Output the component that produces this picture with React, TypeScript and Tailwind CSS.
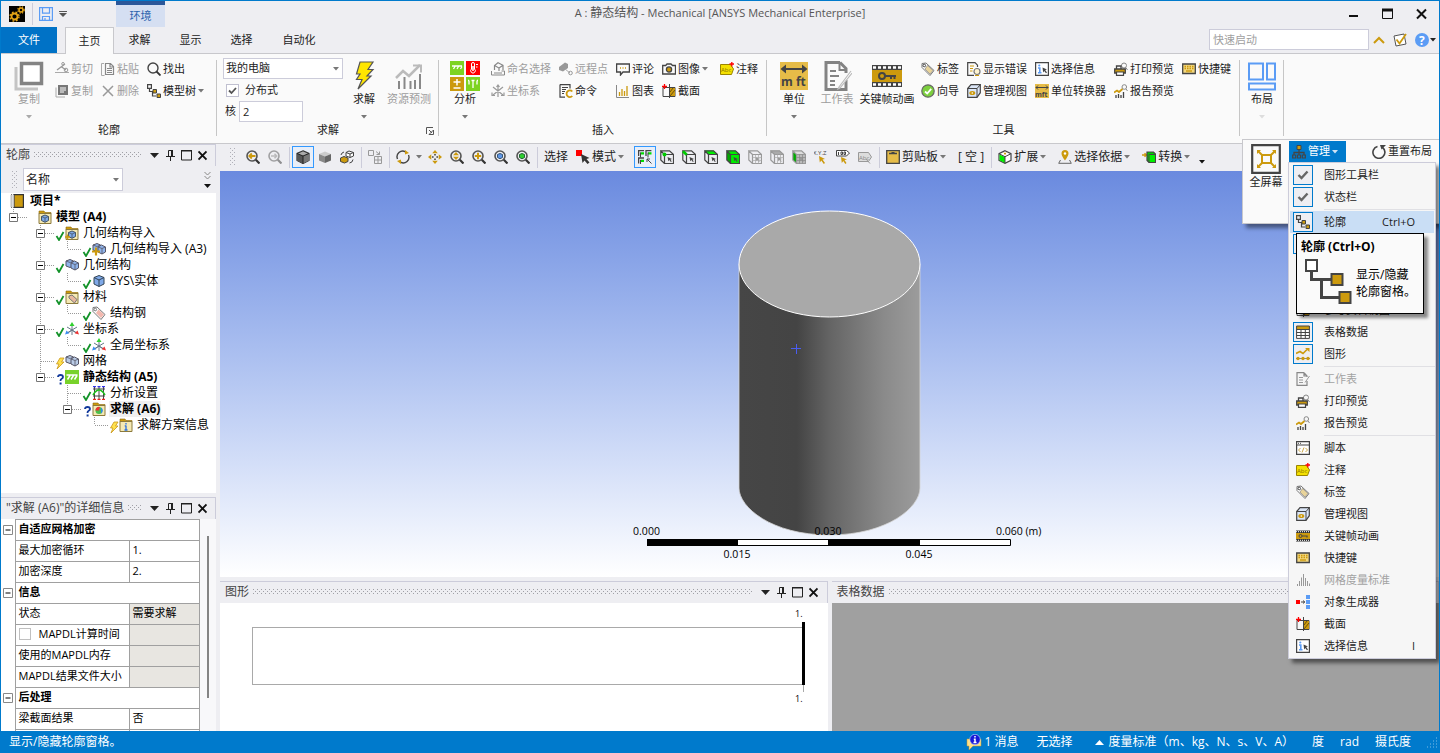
import { useState, type ReactNode } from "react";

const GRAY = "#444";
const GOLD = "#cc9a0e";
const BLUE = "#5b9cf5";

function Svg({ w = 14, h = 14, children }: { w?: number; h?: number; children: ReactNode }) {
  return (
    <svg width={w} height={h} viewBox={`0 0 ${w} ${h}`} fill="none" className="block shrink-0" aria-hidden="true">
      {children}
    </svg>
  );
}

const lens = (
  <>
    <circle cx="6" cy="6" r="5" stroke="#555" strokeWidth="1.6" />
    <path d="M9.8 9.8L13.5 13.5" stroke="#333" strokeWidth="2.2" />
  </>
);

const pickCube = (fill: string, front = "none", color = GRAY) => (
  <>
    <path d="M1 1.5V.5h8.5l4 4H4.5z" fill={fill} />
    {front !== "none" && <path d="M1 1l3.5 3.500V13.500L1 10z" fill="#0a0" />}
    <path d="M4.500 4.500h9v9h-9z" fill={front} />
    <path d="M4.500 4.500h9v9h-9zM4.500 4.500L.8 1V10l3.700 3.500M.8 .8h8.700l4 3.700" stroke={color} strokeWidth="1.2" />
    <path d="M7.500 7l4.500 2-1.500.5 1.200 2-.9.600-1.200-2-1.200 1.200z" fill={color} />
  </>
);

const folder = (
  <>
    <path d="M1 3V1h5l1 1.500h6V4H1z" fill={GOLD} stroke="#8a6a10" strokeWidth=".6" />
    <path d="M1 3.500h12v10H1z" fill="#f5e9b4" stroke="#8c7a3c" strokeWidth="1" />
  </>
);

const smallCube = (
  <>
    <path d="M7 5l3.500 1.500v4L7 12.300l-3.500-1.800v-4z" fill="#7fa9e8" stroke="#456" strokeWidth="1" />
    <path d="M3.500 6.500L7 8l3.500-1.500M7 8v4" stroke="#456" strokeWidth=".8" />
  </>
);

const twinCubes = (fill: string) => (
  <>
    <path d="M1 3l4-1.500L8.500 3v5L5 9.500 1 8z" fill={fill} stroke="#556" />
    <path d="M6 5l3.500-2L13.500 5v5L10 12l-4-2z" fill={fill} stroke="#556" />
    <path d="M6 5l4 1.500L13.500 5M10 6.500V12M1 3l4 1.500L8.500 3" stroke="#556" strokeWidth=".8" />
  </>
);

const axes = (
  <>
    <path d="M7 3v10M7 8l-4 3M7 8l4 3M2 5l10 6M12 5L2 11" stroke="#678" strokeWidth="1" />
    <path d="M7 0l2.500 4h-5z" fill="#2fd02f" />
    <path d="M14 12.500l-1.500-4-2.800 2.800z" fill="#e33" />
    <path d="M0 12.500l1.500-4 2.800 2.800z" fill="#3a8cf0" />
  </>
);

const icons: Record<string, ReactNode> = {
  cut: (
    <>
      <path d="M0 10.500h14" stroke="#aaa" />
      <path d="M2 8L10 2M6 4.500l5 3.500" stroke="#999" strokeWidth="1.300" />
      <circle cx="11" cy="8" r="1.800" stroke="#999" />
      <circle cx="8" cy="1.800" r="1.300" stroke="#999" />
    </>
  ),
  copy: (
    <>
      <path d="M1 3.500v9.500h9" stroke="#aaa" />
      <path d="M3 1h10v10H3z" fill="#777" />
      <path d="M5 4h6M5 6h6M5 8h4" stroke="#fff" />
    </>
  ),
  paste: (
    <>
      <path d="M3 1.500H.5v12h3" stroke="#aaa" />
      <path d="M4.500 1.500h5l3 3v8h-8zM9 1.500V5h3.500" stroke="#888" strokeWidth="1.200" />
      <path d="M6 6.500h5M6 8.500h5M6 10.500h5" stroke="#888" />
    </>
  ),
  del: <path d="M2 2l10 10M12 2L2 12" stroke="#999" strokeWidth="1.500" />,
  find: (
    <>
      <circle cx="6" cy="6" r="5" stroke="#444" strokeWidth="1.400" />
      <path d="M9.500 9.500l4 4" stroke="#333" strokeWidth="1.800" />
    </>
  ),
  tree: (
    <>
      <path d="M.6 .6h3.800v3.800H.6z" stroke={GRAY} strokeWidth="1.200" />
      <path d="M2.500 5v2.500H6M5.500 8v4H9" stroke={GRAY} strokeWidth="1.200" />
      <path d="M6 5.500h3.500V9H6zM10 10h3.500v3.500H10z" fill={GOLD} stroke={GRAY} />
    </>
  ),
  named: (
    <>
      <path d="M.5 9v4h13V9h-3M3 11h8" stroke="#888" />
      <path d="M3.500 8V3.500L7 .8l5 2.500V8M3.500 3.500l4.500 2.500V9M8 6l4-2.700" stroke="#888" strokeWidth="1.200" />
    </>
  ),
  coord: (
    <path d="M7 1v12M2 3l10 8M12 3L2 11M5.500 3L7 1l1.500 2M1 8.500v3h3M13 8.500v3h-3" stroke="#999" strokeWidth="1.200" />
  ),
  remote: (
    <>
      <path d="M0 5l6-4.500L9 2v4L4 9.500 0 8z" fill="#999" />
      <path d="M6 7l5 4" stroke="#aaa" />
      <circle cx="11.500" cy="11" r="1.800" stroke="#999" />
    </>
  ),
  command: (
    <>
      <path d="M1 .6h10v4M1 .6v12.500h5" stroke={GRAY} strokeWidth="1.200" />
      <path d="M3 3.500h6M3 5.500h4M3 7.500h3M3 9.500h2" stroke={GRAY} />
      <path d="M13.300 7.500a3.300 3.300 0 1 0 0 4.500" stroke={GOLD} strokeWidth="1.800" />
    </>
  ),
  comment: (
    <>
      <path d="M.6 2h12.800v8H7l-2.500 3V10H.6z" stroke={GRAY} strokeWidth="1.300" />
      <path d="M4 6h1M6.500 6h1M9 6h1" stroke={GOLD} strokeWidth="1.300" />
    </>
  ),
  chart: (
    <>
      <path d="M.5 1v12.500H13" stroke="#888" />
      <path d="M3.500 12V8M6 12V5M8.500 12V7M11 12V2" stroke={GOLD} strokeWidth="1.300" />
    </>
  ),
  image: (
    <>
      <path d="M.7 3.500h3L5 2h4l1.500 1.500h3V12H.7z" stroke={GRAY} strokeWidth="1.300" />
      <circle cx="7" cy="7.500" r="2.600" stroke={GRAY} fill={GOLD} strokeWidth="1.300" />
    </>
  ),
  section: (
    <>
      <path d="M1 3.500h12v9H1z" stroke={GRAY} />
      <path d="M7.500 4H13v8H7.500z" fill={GOLD} />
      <path d="M8 12l5-6M8 8l3-4" stroke="#6b510a" />
      <path d="M7.500 0v14" stroke={GRAY} />
      <path d="M0 2.500h5M2.500 0v5" stroke="#f00" strokeWidth="1.300" />
    </>
  ),
  annot: (
    <>
      <path d="M.5 2.500h10l3 4.500-2 5.500H.5z" fill="#f4e000" stroke="#9a8500" />
      <text x="1" y="10" fontSize="6" fill="#8a7600">Abc</text>
      <path d="M9.500 2h4.500M11.800 0v4.500" stroke="#f00" strokeWidth="1.300" />
    </>
  ),
  tag: (
    <>
      <path d="M1 1.500l4-.5 8 7.500-4 5-8-8z" fill="#fff" stroke="#777" />
      <path d="M6.500 3.500l5.500 5-3 3.500-5-5z" fill="#e9d49a" stroke="#777" strokeWidth=".6" />
      <circle cx="3.300" cy="3.500" r="1.300" stroke={GRAY} />
    </>
  ),
  wizard: (
    <>
      <circle cx="7" cy="7" r="6.200" fill="#7ccf3e" stroke="#666" strokeWidth="1.200" />
      <path d="M4 7.500L6.200 9.500 10.200 4.800" stroke="#fff" strokeWidth="1.800" />
    </>
  ),
  errors: (
    <>
      <path d="M3 .7H.7v12.600H7M3 .7h5l2.500 2.500V5" stroke={GRAY} strokeWidth="1.200" />
      <path d="M3 4h4M3 6.500h3M3 9h2.500" stroke={GOLD} />
      <circle cx="10" cy="9.500" r="3" fill="#fdf3cf" stroke="#777" strokeWidth="1.200" />
      <path d="M8 13.500h4" stroke={GOLD} />
    </>
  ),
  views: (
    <>
      <path d="M.7 4.500L4 .7h9.300v8L10 13.300H.7z" fill="#dbe6f7" stroke={GRAY} strokeWidth="1.200" />
      <path d="M.7 4.500H10l3.300-3.800M10 4.500v8.800" stroke={GRAY} />
      <ellipse cx="5.300" cy="9" rx="3" ry="2" fill={GOLD} />
      <circle cx="5.300" cy="9" r=".8" fill="#fff" />
    </>
  ),
  selinfo: (
    <>
      <path d="M.6 .6h12.800v12.800H.6z" fill="#fff" stroke={GRAY} strokeWidth="1.200" />
      <path d="M3 6h1.800v4.500M3 10.800h3.500" stroke={BLUE} strokeWidth="1.600" />
      <circle cx="4.300" cy="3.500" r="1.100" fill={BLUE} />
      <path d="M7.500 5.500l4.500 2-1.800.6 1.800 2.400-1 .8-1.800-2.300-1 1.500z" fill={GRAY} />
    </>
  ),
  convert: (
    <>
      <path d="M0 0h14v14H0z" fill="#e6bc48" />
      <path d="M1 3.500h12M3 1.500l-2 2 2 2M11 1.500l2 2-2 2" stroke={GRAY} />
      <text x="0" y="13" fontSize="7" fontWeight="700" fill={GRAY}>mft</text>
    </>
  ),
  print: (
    <>
      <circle cx="10" cy="3.500" r="2.500" stroke="#888" />
      <path d="M11.800 5.500L13.500 8" stroke="#888" />
      <path d="M2.500 7V4h4.500v3" stroke={GRAY} strokeWidth="1.300" />
      <path d="M.7 7h10.600v4H.7z" fill={GOLD} stroke={GRAY} strokeWidth="1.300" />
      <path d="M2.500 10h7v3.400h-7z" fill="#fff" stroke={GRAY} strokeWidth="1.200" />
    </>
  ),
  report: (
    <>
      <circle cx="10.300" cy="3" r="2.300" stroke="#888" />
      <path d="M12 5l1.500 2" stroke="#888" />
      <path d="M0 8.500l3-2 2 1.500 3.500-3" stroke={GOLD} strokeWidth="1.800" />
      <path d="M2 14v-3M4.500 14v-4M7 14v-3M9.500 14V8" stroke={GRAY} strokeWidth="1.300" />
    </>
  ),
  keyboard: (
    <>
      <path d="M.7 2h12.600v9.500H.7z" fill="#f3d77e" stroke={GRAY} strokeWidth="1.300" />
      <path d="M2.500 4.500h9M2.500 6.500h9" stroke={GOLD} strokeWidth="1.400" strokeDasharray="1.500 1" />
      <path d="M4 9h6" stroke={GOLD} strokeWidth="1.400" />
    </>
  ),
  project: (
    <>
      <path d="M4 .6h9.400v12.800H4z" fill={GOLD} stroke="#333" strokeWidth="1.200" />
      <path d="M1 .5h3v13H1z" fill="#ddd" stroke="#777" strokeDasharray="1 1" />
    </>
  ),
  folderCube: (<>{folder}{smallCube}</>),
  folderImport: (
    <>
      {folder}
      {smallCube}
      <path d="M0 11h5M2.500 8.500v5" stroke={GOLD} strokeWidth="1.500" />
    </>
  ),
  geomImport: (
    <>
      {twinCubes("#8fb3ea")}
      <path d="M0 9.500h8M4 5.500v8" stroke={GOLD} strokeWidth="2.200" />
    </>
  ),
  geometry: twinCubes("#8fb3ea"),
  mesh: twinCubes("#b9cbe6"),
  body: (
    <>
      <path d="M7 1.500l5 2v6.500l-5 2.500-5-2.500V3.500z" fill="#7fa9e8" stroke="#345" />
      <path d="M2 3.500l5 2.500 5-2.500M7 6v6.500" stroke="#345" />
    </>
  ),
  folderTag: (
    <>
      {folder}
      <path d="M4 6l3-1 5 4.500-2.500 3.500L4 8z" fill="#e8b8a0" stroke="#777" />
    </>
  ),
  steel: (
    <>
      <path d="M1 1.500l4-.5 8 7.500-4 5-8-8z" fill="#fff" stroke="#777" />
      <path d="M6.500 3.500l5.500 5-3 3.500-5-5z" fill="#f2b8ae" />
      <circle cx="3.300" cy="3.500" r="1.300" stroke="#777" />
    </>
  ),
  axes,
  staticStruct: (
    <>
      <path d="M0 0h14v14H0z" fill="#78d22a" />
      <path d="M1.500 5h11M5 5.500l-2.500 4M8.500 5.500L6 9.500M12 5.500l-2.500 4" stroke="#fff" strokeWidth="1.500" />
    </>
  ),
  settings: (
    <>
      <path d="M2.500 1v12M7 1v12M11.500 1v12M1 3h12M1 10h12" stroke={GRAY} />
      <path d="M1 9Q7-1 13 9" stroke="#1fc01f" strokeWidth="1.600" />
      <path d="M1 13.500h3M5.500 13.500h3M10 13.500h3" stroke="#e22" strokeWidth="1.600" />
      <path d="M1 .5h3M5.500 .5h3M10 .5h3" stroke="#33e" strokeWidth="1.400" />
    </>
  ),
  solution: (
    <>
      {folder}
      <circle cx="7" cy="8.500" r="3.500" fill="#4bbf4b" />
      <path d="M3.500 8.500A3.500 3.500 0 0 1 8 5L7 8.500z" fill="#e33" />
      <path d="M9 5.500a3.500 3.500 0 0 1 0 6z" fill="#38e" />
    </>
  ),
  solInfo: (
    <>
      {folder}
      <path d="M7 5v1.500M7 7.500V12M5.500 12h3M5.700 7.800H7" stroke="#2a6fe0" strokeWidth="1.300" />
    </>
  ),
  zoomBack: (<>{lens}<path d="M3 6h6.500M5.800 3.500L3.300 6l2.500 2.500" stroke={GOLD} strokeWidth="1.800" /></>),
  zoomFwd: (
    <g opacity=".5">
      {lens}
      <path d="M3 6h6M6.500 3.800L8.700 6 6.500 8.200" stroke="#888" strokeWidth="1.500" />
    </g>
  ),
  zoomUD: (<>{lens}<path d="M6 2L9 5.300H3zM6 10L3 6.700h6z" fill={GOLD} /></>),
  zoomIn: (<>{lens}<path d="M2.800 6h6.400M6 2.800v6.400" stroke={GOLD} strokeWidth="2" /></>),
  zoomFit: (<>{lens}<path d="M3.500 4.500L6 3.500l2.500 1v3L6 8.800 3.500 7.500z" fill="#5d95e8" stroke="#357" /></>),
  zoomSel: (<>{lens}<path d="M3.500 4.500L6 3.500l2.500 1v3L6 8.800 3.500 7.500z" fill="#2fd02f" stroke="#263" /></>),
  shaded: (
    <>
      <path d="M7 .8l6 2.700v7L7 13.500l-6-3v-7z" fill="#aaa" stroke="#333" strokeWidth="1.200" />
      <path d="M1 3.500L7 6v7.500l-6-3z" fill="#555" />
      <path d="M13 3.500L7 6v7.500l6-3z" fill="#777" />
      <path d="M1 3.500L7 6l6-2.500M7 6v7.500" stroke="#222" />
    </>
  ),
  solid: (
    <>
      <path d="M7 1.500l6 2.500-6 2.500L1 4z" fill="#ccc" />
      <path d="M1 4l6 2.500V13l-6-2.500z" fill="#888" />
      <path d="M13 4L7 6.500V13l6-2.500z" fill="#666" />
    </>
  ),
  swapCubes: (
    <>
      <path d="M6 2.500L9 1l4.500 1.500v3.500L10 7.500 6 6zM6 2.500L10 4l3.500-1.500M10 4v3.500" fill="#fff" stroke={GRAY} />
      <path d="M.5 8L4 6.500 8 8v3.500L4.500 13l-4-1.500z" fill={GOLD} stroke={GRAY} />
      <path d="M1 5a4 4 0 0 1 3-3M13 9.500a4 4 0 0 1-3.500 3.500" stroke={GRAY} />
    </>
  ),
  bodies: (
    <g stroke="#999">
      <path d="M.5 .5h5v5h-5zM6.500 6.500h7v7h-7zM10 6.500v7M6.500 10h7" />
      <path d="M8 1.500l3.500 3M11.500 1.500v3h-3" />
    </g>
  ),
  rotate: (
    <>
      <path d="M1.500 9A5.700 5.700 0 0 1 9.500 1.800M12.500 5A5.700 5.700 0 0 1 4.500 12.200" stroke={GRAY} strokeWidth="1.400" />
      <path d="M9 0l4 3-4 1.500zM5 14l-4-3 4-1.500z" fill={GOLD} />
    </>
  ),
  pan: (
    <>
      <path d="M7 0l2.800 3.300H4.200zM7 14l2.800-3.300H4.200zM0 7l3.300-2.800v5.600zM14 7l-3.300-2.800v5.600z" fill={GOLD} />
      <path d="M6.200 4h1.600v1.600H6.200zM6.200 8.400h1.600V10H6.200zM4 6.200h1.600v1.600H4zM8.400 6.200H10v1.600H8.400z" fill={GRAY} />
    </>
  ),
  pickMode: (
    <>
      <path d="M0 0h6v6H0z" fill="#f00" />
      <path d="M5 4l8.500 4-3 1 3 3.500-2 1.500-3-3.500-2 2.500z" fill="#333" />
    </>
  ),
  smartPick: (
    <>
      <path d="M.6 6V.6H6M8 6V.6h5.400M.6 13.500V8H6" stroke={GRAY} strokeWidth="1.300" />
      <path d="M2.500 3.300H6M10 3.300h3.500M2.500 10.800H6" stroke="#0d0" strokeWidth="2.200" />
      <path d="M2.500 2.500v5M10 2.500v5M2.500 10v4M9 9l4.500 4.500M9 12V9h3" stroke={GRAY} />
    </>
  ),
  pickVertex: (<>{pickCube("none")}<circle cx="4.500" cy="4.500" r="2" fill="#0c0" /></>),
  pickEdge: (<>{pickCube("none")}<path d="M1 1.300l3.700 3.400" stroke="#0c0" strokeWidth="2.800" /></>),
  pickFace: pickCube("#0e0"),
  pickBody: pickCube("#0e0", "#0e0"),
  pickGray: (
    <>
      {pickCube("none", "none", "#999")}
      <path d="M4.500 7.500h9M4.500 10.500h9M7.500 4.500v9M10.500 4.500v9" stroke="#aaa" strokeWidth=".7" />
    </>
  ),
  pickGray2: (
    <>
      {pickCube("#aaa", "none", "#999")}
      <path d="M4.500 7.500h9M7.500 4.500v9M10.500 4.500v9" stroke="#aaa" strokeWidth=".7" />
    </>
  ),
  pickGray3: (
    <>
      {pickCube("#ddd", "#bbb", "#999")}
      <path d="M4.500 7.500h9M4.500 10.500h9M7.500 4.500v9M10.500 4.500v9" stroke="#888" strokeWidth=".7" />
    </>
  ),
  coordsPick: (
    <>
      <text x="-1" y="4.500" fontSize="6" fill={GRAY}>X.Y.Z</text>
      <path d="M5 6l6 3-2.500.5 2.500 3.500-1.200 1-2.500-3.500-1.500 2z" fill={GOLD} />
    </>
  ),
  label: (
    <>
      <path d="M.5 .5h10l3 2.500-3 3H.5z" fill="#fff" stroke={GRAY} />
      <path d="M2.500 2v3M5 2h1.500v2.500H5zM8 2h1.500v2.500H8z" stroke={GRAY} />
      <path d="M5 7l6 2.500-2.500.5 2 3-1.200 1-2-3-1.500 2z" fill={GOLD} />
    </>
  ),
  abc: (
    <>
      <path d="M.5 2.500h10l3 4.500-3 4.500H.5z" fill="#ddd" stroke="#999" />
      <text x="1" y="9.500" fontSize="6" fill="#888">Abc</text>
      <path d="M8 9l4 4.500" stroke="#999" />
    </>
  ),
  clipboard: (
    <>
      <path d="M.7 .7h12.600v12.600H.7z" fill="#e6bc48" stroke={GRAY} strokeWidth="1.300" />
      <path d="M3 3.500h8M5.500 2.800h3" stroke={GRAY} strokeWidth="1.400" />
    </>
  ),
  extend: (
    <>
      <path d="M7 .7l6 3v6.600l-6 3-6-3V3.700z" fill="#fff" stroke={GRAY} strokeWidth="1.200" />
      <path d="M1.500 4.500L7 7v6l-5.500-2.700z" fill="#0e0" />
      <path d="M1 3.700l6 3 6-3M7 6.700v6.600" stroke={GRAY} />
      <path d="M6 2.500l1 2 1-2" stroke={GOLD} />
    </>
  ),
  pin: (
    <>
      <path d="M7 0a3.500 3.500 0 0 1 3.500 3.500C10.500 6 7 10.500 7 10.500S3.500 6 3.500 3.500A3.500 3.500 0 0 1 7 0z" fill={GOLD} />
      <circle cx="7" cy="3.500" r="1.200" fill="#fff" />
      <path d="M2.500 10L.7 13.300h12.600L11.500 10" stroke="#666" />
    </>
  ),
  transform: (
    <>
      <path d="M0 5h4M2.500 3.200L4.500 5 2.500 6.800" stroke={GOLD} strokeWidth="1.400" />
      <path d="M5 2h6.500l2 2v8.500H7L5 10.500z" fill="#0c0" stroke={GRAY} strokeWidth="1.200" />
      <path d="M7 4.500h6.500v8H7z" fill="#0e0" stroke={GRAY} />
    </>
  ),
  manage: (
    <>
      <path d="M5 .5h4v4H5z" fill={GOLD} stroke={GRAY} />
      <path d="M7 5v2.500M2 10V7.500h10V10M7 7.500V10" stroke={GRAY} strokeWidth="1.300" />
      <path d="M.7 10h3v3h-3zM5.500 10h3v3h-3zM10.300 10h3v3h-3z" stroke={GRAY} strokeWidth="1.200" />
    </>
  ),
  reset: (
    <>
      <path d="M5.500 1.500a6 6 0 1 0 5 1" stroke={GRAY} strokeWidth="1.600" />
      <path d="M8 0h6L9.500 4.500z" fill={GRAY} />
    </>
  ),
  check: <path d="M2.500 7L5.500 10 11.500 3.500" stroke="#666" strokeWidth="2.400" />,
  table: (
    <>
      <path d="M.6 1h12.800v12.400H.6z" fill="#fff" />
      <path d="M.6 1h12.800v3.500H.6z" fill={GOLD} />
      <path d="M.6 1h12.800v12.400H.6zM.6 4.500h12.800M.6 7.500h12.800M.6 10.500h12.800M5 4.500v9M9.300 4.500v9" stroke={GRAY} />
    </>
  ),
  graph: (
    <>
      <path d="M0 6.500l4-2 3 2 4-4" stroke={GOLD} strokeWidth="1.600" />
      <path d="M9 1h4.500v4z" fill={GOLD} />
      <path d="M0 11.500h14" stroke="#888" />
      <circle cx="2" cy="11.500" r="1.700" fill={GOLD} />
      <circle cx="7" cy="11.500" r="1.700" fill={GOLD} />
      <circle cx="12" cy="11.500" r="1.700" fill={GOLD} />
    </>
  ),
  worksheet: (
    <>
      <path d="M8 .7H1v12.600h10V9M8 .7L11 4v1M8 .7V4h3" stroke="#888" strokeWidth="1.200" />
      <path d="M3 5.500h4M3 8h4M3 10.500h4M13.500 4L9 10.500" stroke="#999" />
    </>
  ),
  script: (
    <>
      <path d="M.6 .6h12.800v12.800H.6zM.6 4h12.800" fill="#fff" stroke={GRAY} strokeWidth="1.200" />
      <path d="M2 2.300h1M4 2.300h1" stroke={GRAY} />
      <path d="M4.500 7L2.500 9l2 2M9.500 7l2 2-2 2M8 6.500l-2 5" stroke="#cda94a" />
    </>
  ),
  keyframe: (
    <>
      <path d="M0 1.500h14v11H0z" fill="#333" />
      <path d="M0 4h14v6H0z" fill={GOLD} />
      <path d="M0 2.700h14M0 11.300h14" stroke="#fff" strokeDasharray="1 1" />
      <circle cx="4.500" cy="7" r="1.500" stroke={GRAY} />
      <path d="M6 7h5v1.500" stroke={GRAY} strokeWidth="1.200" />
    </>
  ),
  metrics: (
    <path d="M1.500 13v-2M3.500 13V8M5.500 13V4.500M7.500 13V1M9.500 13V5M11.500 13V8M13.500 13v-2.500" stroke="#999" />
  ),
  generator: (
    <>
      <path d="M0 5h4v4H0z" fill="#f00" />
      <path d="M5 7h4M7 5.500L8.700 7 7 8.500" stroke={GRAY} />
      <path d="M10 0h4v4h-4zM10 5h4v4h-4zM10 10h4v4h-4z" fill={BLUE} />
    </>
  ),
};

function Icon({ name }: { name: string }) {
  return <Svg>{icons[name]}</Svg>;
}

function Caret({ color = "#777" }: { color?: string }) {
  return (
    <Svg w={6} h={4}>
      <path d="M0 0h6L3 3.500z" fill={color} />
    </Svg>
  );
}

/* ---------- title bar and ribbon tabs ---------- */

function TitleBar() {
  return (
    <div className="flex h-[26px] shrink-0">
      <div className="flex w-[166px] shrink-0">
        <div className="flex w-[115px] items-center pl-2">
          <Svg w={16} h={16}>
            <path d="M0 0h16v16H0z" fill="#000" />
            <circle cx="5.500" cy="10.500" r="3" stroke="#e5a416" strokeWidth="1.800" />
            <circle cx="5.500" cy="10.500" r="4.500" stroke="#e5a416" strokeWidth="1.400" strokeDasharray="1.800 1.800" />
            <circle cx="12" cy="4" r="2" stroke="#e5a416" strokeWidth="1.500" />
            <circle cx="12" cy="4" r="3.200" stroke="#e5a416" strokeWidth="1.200" strokeDasharray="1.300 1.300" />
          </Svg>
          <span className="ml-[7px] h-[22px] w-px bg-[#ccccda]" />
          <button aria-label="保存" className="ml-1.5">
            <Svg>
              <path d="M.6 .6h12.800v12.800H.6zM3.500 .6v5.500h7V.6M3.500 13.400V9.500h7v3.900M6 11v2.400" stroke={BLUE} strokeWidth="1.200" />
            </Svg>
          </button>
          <button aria-label="自定义快速访问" className="ml-1.5">
            <Svg w={8} h={6}>
              <path d="M0 .5h8" stroke="#555" />
              <path d="M0 2h8L4 6z" fill="#555" />
            </Svg>
          </button>
        </div>
        <div className="w-[49px] border-t-[4px] border-[#2b579a] bg-[#d5dff2] text-center text-[11px] leading-[22px] text-[#2b62ad]">
          环境
        </div>
      </div>
      <h1 className="flex-1 text-center text-[11px] leading-6 text-[#555]">
        A : <span className="text-[12px]">静态结构</span> - Mechanical [ANSYS Mechanical Enterprise]
      </h1>
      <div className="flex w-[166px] shrink-0 items-center justify-end gap-[23px] pr-3">
        <button aria-label="最小化">
          <Svg w={11} h={12}><path d="M1 8h9" stroke="#111" strokeWidth="2" /></Svg>
        </button>
        <button aria-label="最大化">
          <Svg w={11} h={12}>
            <path d="M.5 2h10v8.500H.5z" stroke="#111" />
            <path d="M0 2h11" stroke="#111" strokeWidth="3" />
          </Svg>
        </button>
        <button aria-label="关闭">
          <Svg w={11} h={12}><path d="M1 1.500l9 9M10 1.500l-9 9" stroke="#111" strokeWidth="2" /></Svg>
        </button>
      </div>
    </div>
  );
}

function TabBar() {
  return (
    <div className="flex h-[27px] shrink-0 border-b border-[#c8c8cc] text-[11px] text-[#222]">
      <button className="h-[26px] w-14 bg-[#0072c6] text-white">文件</button>
      <nav className="ml-2 flex">
        <button className="h-[27px] w-[49px] border border-b-0 border-[#c8c8cc] bg-[#fafafa]">主页</button>
        <button className="w-[51px]">求解</button>
        <button className="w-[51px]">显示</button>
        <button className="w-[51px]">选择</button>
        <button className="w-16">自动化</button>
      </nav>
      <div className="ml-auto flex items-start pt-[2px]">
        <input
          aria-label="快速启动"
          placeholder="快速启动"
          className="h-[21px] w-40 border border-[#ccccda] bg-white px-[3px] text-[11px] outline-none placeholder:text-[#a0a0a0]"
        />
        <div className="flex h-[21px] items-center pr-[3px]">
          <button aria-label="折叠" className="ml-1">
            <Svg w={12} h={8}><path d="M1 7l5-5 5 5" stroke={GOLD} strokeWidth="2" /></Svg>
          </button>
          <button aria-label="选项" className="ml-2">
            <Svg>
              <path d="M1 3l10-2 2 10-10 2z" stroke="#555" fill="#fff" />
              <path d="M3.500 6.500l3 4L13 1" stroke={GOLD} strokeWidth="1.800" />
            </Svg>
          </button>
          <button aria-label="帮助" className="ml-2 flex items-center gap-px">
            <Svg>
              <circle cx="7" cy="7" r="7" fill={BLUE} />
              <text x="4" y="11.500" fontSize="12" fontWeight="700" fill="#fff">?</text>
            </Svg>
            <Caret color="#222" />
          </button>
        </div>
      </div>
    </div>
  );
}

/* ---------- ribbon ---------- */

const bigIcons: Record<string, ReactNode> = {
  copy: (
    <>
      <path d="M2 6v22h22" stroke="#c4c4c4" strokeWidth="3" />
      <path d="M7.500 2.500h20v20h-20z" fill="#fff" stroke="#838383" strokeWidth="3.500" />
    </>
  ),
  solve: (
    <path d="M11 1h13l-5 7.500h5L18 15h4L9 28l4-9.500H7.500L11 13H7.500z" fill="#ffe600" stroke="#555" strokeWidth="1.200" />
  ),
  forecast: (
    <>
      <path d="M2 17l7-7 6 5L26 4" stroke="#bbb" strokeWidth="2.500" />
      <path d="M19 4.500h8v7" stroke="#bbb" strokeWidth="2" />
      <path d="M5 28v-8M10.500 28V16M16.500 28v-8M21 28v-9M26 28V13" stroke="#888" strokeWidth="2" />
    </>
  ),
  analysis: (
    <>
      <path d="M0 0h14v14H0zM16 16h14v14H16z" fill="#7ed321" />
      <path d="M16 0h14v14H16z" fill="#f00" />
      <path d="M0 16h14v14H0z" fill={GOLD} />
      <path d="M2 5h10M5 5.500L3.500 8M8.500 5.500L7 8M12 5.500L10.500 8" stroke="#fff" strokeWidth="1.300" />
      <path d="M21.500 8V3a1.500 1.500 0 0 1 3 0v5a2.300 2.300 0 1 1-3 0zM26 3.500h2M26 6h1.500" stroke="#fff" />
      <path d="M23 5v5" stroke="#fff" strokeWidth="1.500" />
      <path d="M3.500 21h7M7 18v6.500M3.500 27h7" stroke="#fff" strokeWidth="1.500" />
      <path d="M18 19.500h1M21.500 19.500h3M27 19.500h1M19 19.500v4M23 20v7M27 19.500v4" stroke="#fff" strokeWidth="1.300" />
    </>
  ),
  units: (
    <>
      <path d="M1 1h28v28H1z" fill="#e6bc48" />
      <path d="M3 8h24" stroke={GRAY} strokeWidth="2" />
      <path d="M1.500 8L7 3.500v9zM28.500 8L23 3.500v9z" fill={GRAY} />
      <text x="2" y="25" fontSize="12" fontWeight="700" fill={GRAY}>m ft</text>
    </>
  ),
  worksheet: (
    <>
      <path d="M18 1.500H4v27h20V19M18 1.500l6 6V12" stroke="#838383" strokeWidth="3" />
      <path d="M17.500 1v8H25" stroke="#838383" strokeWidth="2" />
      <path d="M8 10h6M8 15h9M8 20h5M8 24h5" stroke="#838383" strokeWidth="2" />
      <path d="M29 10L17 26l-1 2 2-1L30 12" stroke="#bbb" strokeWidth="1.200" fill="#fff" />
    </>
  ),
  keyframe: (
    <>
      <path d="M0 4h30v22H0z" fill="#444" />
      <path d="M0 9h30v12H0z" fill={GOLD} />
      <path d="M1 6.500h28M1 23.500h28" stroke="#fff" strokeWidth="2.500" strokeDasharray="3 2" />
      <circle cx="10" cy="15" r="3" stroke="#444" strokeWidth="2" />
      <path d="M13 15h11M19 15v3M22.500 15v3" stroke="#444" strokeWidth="2" />
    </>
  ),
  layout: (
    <path d="M2 2.500h14v16H2zM20 2.500h8v16h-8zM2 22.500h26v6H2z" stroke={BLUE} strokeWidth="2" />
  ),
  fullscreen: (
    <>
      <path d="M1.200 1.200h27.600v27.600H1.200z" stroke={GRAY} strokeWidth="2.200" />
      <path d="M11 11h9v8h-9z" stroke={GOLD} strokeWidth="2" />
      <path d="M11 11L7 7M20 11l4-4M11 19l-4 4M20 19l4 4" stroke={GOLD} strokeWidth="2" />
      <path d="M6 6h4l-4 4zM25 6h-4l4 4zM6 24h4l-4-4zM25 24h-4l4-4z" fill={GOLD} />
    </>
  ),
};

type BigProps = { icon: string; label: string; className: string; caret?: string; off?: boolean };

function BigButton({ icon, label, className, caret, off }: BigProps) {
  return (
    <button className={`flex shrink-0 flex-col items-center pt-[3px] whitespace-nowrap ${className}`} disabled={off}>
      <Svg w={30} h={30}>{bigIcons[icon]}</Svg>
      <span className={`text-[11px] leading-4 ${off ? "text-[#9d9d9d]" : "text-[#222]"}`}>{label}</span>
      {caret && (
        <span className="mt-2">
          <Caret color={caret} />
        </span>
      )}
    </button>
  );
}

type Cmd = { icon: string; label: string; off?: boolean; menu?: boolean };

function Column({ items, className }: { items: Cmd[]; className: string }) {
  return (
    <div className={`flex shrink-0 flex-col ${className}`}>
      {items.map((c) => (
        <button
          key={c.label}
          disabled={c.off}
          className={`flex h-[22px] items-center gap-[2px] whitespace-nowrap text-[11px] ${c.off ? "text-[#9d9d9d]" : "text-[#222]"}`}
        >
          <Icon name={c.icon} />
          {c.label}
          {c.menu && <Caret />}
        </button>
      ))}
    </div>
  );
}

function Group({ title, className, launcher, children }: { title: string; className: string; launcher?: boolean; children: ReactNode }) {
  return (
    <section className={`relative flex shrink-0 flex-col ${className}`}>
      <div className="flex h-16 pt-1">{children}</div>
      <h2 className="mt-auto mb-[5px] text-center text-[11px] leading-4 text-[#222]">{title}</h2>
      <span className="absolute top-1.5 right-0 bottom-[7px] w-px bg-[#c6c6c6]" />
      {launcher && (
        <button aria-label="更多" className="absolute right-[5px] bottom-2">
          <Svg w={8} h={8}>
            <path d="M.5 7V.5H7M3 3l3 3M7.500 3v4.500H3z" stroke="#555" />
          </Svg>
        </button>
      )}
    </section>
  );
}

function Ribbon() {
  const [spread, setSpread] = useState(true);
  return (
    <div className="flex h-[90px] shrink-0 border-b border-[#c8c8cc] bg-[#fafafa]">
      <Group title="轮廓" className="w-[216px]">
        <BigButton icon="copy" label="复制" className="w-14" caret="#aaa" off />
        <Column className="-ml-[2px] w-[46px]" items={[{ icon: "cut", label: "剪切", off: true }, { icon: "copy", label: "复制", off: true }]} />
        <Column className="w-[46px]" items={[{ icon: "paste", label: "粘贴", off: true }, { icon: "del", label: "删除", off: true }]} />
        <Column className="w-[60px]" items={[{ icon: "find", label: "找出" }, { icon: "tree", label: "模型树", menu: true }]} />
      </Group>
      <Group title="求解" className="w-[222px]" launcher>
        <div className="ml-1.5 w-[120px] shrink-0 text-[11px] text-[#222]">
          <div className="relative">
            <select aria-label="求解目标" className="block h-[21px] w-full appearance-none border border-[#ccccda] bg-white pl-[2px] text-[11px] outline-none">
              <option>我的电脑</option>
            </select>
            <span className="pointer-events-none absolute top-[9px] right-1"><Caret /></span>
          </div>
          <label className="mt-1 flex h-[15px] items-center gap-1.5 pl-[3px]">
            <input
              type="checkbox"
              checked={spread}
              onChange={(e) => setSpread(e.target.checked)}
              className="peer sr-only"
            />
            <span className="flex size-[13px] items-center justify-center border border-[#c0c0d0] bg-white">
              {spread && <Svg w={9} h={8}><path d="M1 3.500L3.500 6 8 1" stroke="#555" strokeWidth="1.800" /></Svg>}
            </span>
            分布式
          </label>
          <label className="mt-[3px] flex items-center gap-[3px] pl-[2px]">
            核
            <input defaultValue="2" className="h-[21px] w-16 border border-[#ccccda] bg-white px-[3px] text-[11px] outline-none" />
          </label>
        </div>
        <BigButton icon="solve" label="求解" className="w-[42px]" caret="#777" />
        <BigButton icon="forecast" label="资源预测" className="w-12" off />
      </Group>
      <Group title="插入" className="w-[328px]">
        <BigButton icon="analysis" label="分析" className="w-[52px]" caret="#777" />
        <Column className="w-[68px]" items={[{ icon: "named", label: "命名选择", off: true }, { icon: "coord", label: "坐标系", off: true }]} />
        <Column className="w-[57px]" items={[{ icon: "remote", label: "远程点", off: true }, { icon: "command", label: "命令" }]} />
        <Column className="w-[46px]" items={[{ icon: "comment", label: "评论" }, { icon: "chart", label: "图表" }]} />
        <Column className="w-[58px]" items={[{ icon: "image", label: "图像", menu: true }, { icon: "section", label: "截面" }]} />
        <Column className="w-[42px]" items={[{ icon: "annot", label: "注释" }]} />
      </Group>
      <Group title="工具" className="w-[473px]">
        <BigButton icon="units" label="单位" className="w-[54px]" caret="#777" />
        <BigButton icon="worksheet" label="工作表" className="w-8" off />
        <BigButton icon="keyframe" label="关键帧动画" className="w-[68px]" />
        <Column className="w-[46px]" items={[{ icon: "tag", label: "标签" }, { icon: "wizard", label: "向导" }]} />
        <Column className="w-[68px]" items={[{ icon: "errors", label: "显示错误" }, { icon: "views", label: "管理视图" }]} />
        <Column className="w-[79px]" items={[{ icon: "selinfo", label: "选择信息" }, { icon: "convert", label: "单位转换器" }]} />
        <Column className="w-[68px]" items={[{ icon: "print", label: "打印预览" }, { icon: "report", label: "报告预览" }]} />
        <Column className="w-[55px]" items={[{ icon: "keyboard", label: "快捷键" }]} />
      </Group>
      <Group title="" className="w-11">
        <BigButton icon="layout" label="布局" className="w-11" caret="#ddd" />
      </Group>
    </div>
  );
}

/* ---------- docked panels ---------- */

function Dots() {
  return (
    <svg className="h-[5px] min-w-0 flex-1" shapeRendering="crispEdges" aria-hidden="true">
      <defs>
        <pattern id="dots" width="4" height="4" patternUnits="userSpaceOnUse">
          <path d="M0 0h1v1H0zM2 2h1v1H2z" fill="#a0a0a6" />
        </pattern>
      </defs>
      <rect width="100%" height="5" fill="url(#dots)" />
    </svg>
  );
}

function Grip() {
  return (
    <Svg w={6} h={18}>
      <path d="M1.500 0v18M5.500 0v18" stroke="#b0b0b8" strokeDasharray="1 3" />
      <path d="M3.500 2v16" stroke="#b0b0b8" strokeDasharray="1 3" />
    </Svg>
  );
}

function PanelHeader({ title }: { title: string }) {
  return (
    <header className="flex h-[22px] shrink-0 items-center border-t border-r border-[#ccccda] bg-[#eeeef2] pr-[5px] pb-[2px] pl-[5px] text-[12px] text-[#444]">
      <h2 className="mr-1 whitespace-nowrap">{title}</h2>
      <Dots />
      <div className="ml-1 flex">
        <button aria-label="菜单" className="flex w-4 justify-center">
          <Svg w={9} h={12}><path d="M0 4h9L4.500 9z" fill="#222" /></Svg>
        </button>
        <button aria-label="固定" className="flex w-4 justify-center">
          <Svg w={9} h={12}>
            <path d="M2.500 7V1.500H6V7M0 7.500h9M4.500 8v4" stroke="#222" />
            <path d="M6 1v6" stroke="#222" strokeWidth="2" />
          </Svg>
        </button>
        <button aria-label="最大化" className="flex w-4 justify-center">
          <Svg w={11} h={12}><path d="M.5 2h10v9H.5zM0 1.500h11" stroke="#222" /></Svg>
        </button>
        <button aria-label="关闭" className="flex w-4 justify-center">
          <Svg w={9} h={12}><path d="M.5 2.500l8 8M8.500 2.500l-8 8" stroke="#111" strokeWidth="1.800" /></Svg>
        </button>
      </div>
    </header>
  );
}

type Cell = "blank" | "line" | "tee" | "elbow" | "box" | "boxLast";
type Row = { cells: Cell[]; icon: string; label: string; status?: "ok" | "bolt" | "query"; bold?: boolean; picked?: boolean };

const rows: Row[] = [
  { cells: ["boxLast"], icon: "folderCube", label: "模型 (A4)", bold: true },
  { cells: ["blank", "box"], icon: "folderImport", label: "几何结构导入", status: "ok" },
  { cells: ["blank", "line", "elbow"], icon: "geomImport", label: "几何结构导入 (A3)", status: "ok" },
  { cells: ["blank", "box"], icon: "geometry", label: "几何结构", status: "ok" },
  { cells: ["blank", "line", "elbow"], icon: "body", label: "SYS\\实体", status: "ok" },
  { cells: ["blank", "box"], icon: "folderTag", label: "材料", status: "ok" },
  { cells: ["blank", "line", "elbow"], icon: "steel", label: "结构钢", status: "ok" },
  { cells: ["blank", "box"], icon: "axes", label: "坐标系", status: "ok" },
  { cells: ["blank", "line", "elbow"], icon: "axes", label: "全局坐标系", status: "ok" },
  { cells: ["blank", "tee"], icon: "mesh", label: "网格", status: "bolt" },
  { cells: ["blank", "boxLast"], icon: "staticStruct", label: "静态结构 (A5)", status: "query", bold: true },
  { cells: ["blank", "blank", "tee"], icon: "settings", label: "分析设置", status: "ok" },
  { cells: ["blank", "blank", "boxLast"], icon: "solution", label: "求解 (A6)", status: "query", bold: true, picked: true },
  { cells: ["blank", "blank", "blank", "elbow"], icon: "solInfo", label: "求解方案信息", status: "bolt" },
];

function TreeCell({ kind }: { kind: Cell }) {
  const down = kind === "line" || kind === "tee" || kind === "box";
  const across = kind !== "line" && kind !== "blank";
  const box = kind === "box" || kind === "boxLast";
  return (
    <Svg w={27} h={16}>
      {kind !== "blank" && <path d={down ? "M12.500 0v16" : "M12.500 0v8"} stroke="#999" strokeDasharray="1 1" />}
      {across && <path d="M13 8.500h14" stroke="#999" strokeDasharray="1 1" />}
      {box && (
        <>
          <path d="M8.500 4.500h8v8h-8z" fill="#fff" stroke="#777" />
          <path d="M10 8.500h5" stroke="#000" />
        </>
      )}
    </Svg>
  );
}

function Status({ kind }: { kind?: Row["status"] }) {
  return (
    <Svg w={10} h={16}>
      {kind === "ok" && <path d="M1.500 11l2.500 4 4.500-8" stroke="#14932a" strokeWidth="1.800" />}
      {kind === "bolt" && <path d="M5 5h4L6.500 9H9l-7 7 2-5H1.500z" fill="#ffe14d" stroke="#c9971a" strokeWidth=".8" />}
      {kind === "query" && (
        <>
          <path d="M3 8q0-2 2.500-2T8 8q0 1-1.300 1.700T5.500 12" stroke="#123a9c" strokeWidth="1.800" />
          <path d="M4.600 13.500h2v2h-2z" fill="#123a9c" />
        </>
      )}
    </Svg>
  );
}

function OutlinePanel() {
  return (
    <section className="flex min-h-0 flex-1 flex-col bg-white">
      <PanelHeader title="轮廓" />
      <div className="flex h-[27px] shrink-0 items-center bg-[#eeeef2] pr-[5px] pl-[10px]">
        <Grip />
        <div className="relative ml-1.5">
          <select aria-label="名称" className="block h-[23px] w-[100px] appearance-none border border-[#ccccda] bg-white pl-[2px] text-[12px] text-[#222] outline-none">
            <option>名称</option>
          </select>
          <span className="pointer-events-none absolute top-[10px] right-1"><Caret /></span>
        </div>
        <button aria-label="更多" className="ml-auto">
          <Svg w={7} h={16}>
            <path d="M.5 0l3 3 3-3M.5 4l3 3 3-3" stroke="#888" />
            <path d="M0 12h7l-3.500 4z" fill="#111" />
          </Svg>
        </button>
      </div>
      <div className="flex-1 overflow-hidden text-[12px] leading-4 text-black">
        <div className="flex h-4 items-center pl-[9px] font-bold">
          <Icon name="project" />
          <span className="ml-1.5">项目*</span>
        </div>
        {rows.map((r, i) => (
          <div key={i} className="flex h-4 items-center whitespace-nowrap">
            {r.cells.map((c, j) => (
              <TreeCell key={j} kind={c} />
            ))}
            <Status kind={r.status} />
            <Icon name={r.icon} />
            <span className={`ml-[3px] px-px ${r.bold ? "font-bold" : ""} ${r.picked ? "bg-[#f0f0f0]" : ""}`}>{r.label}</span>
          </div>
        ))}
      </div>
    </section>
  );
}

type Detail = { head?: string; name?: string; value?: string; locked?: boolean; tick?: boolean };

const details: Detail[] = [
  { head: "自适应网格加密" },
  { name: "最大加密循环", value: "1." },
  { name: "加密深度", value: "2." },
  { head: "信息" },
  { name: "状态", value: "需要求解", locked: true },
  { name: "MAPDL计算时间", value: "", locked: true, tick: true },
  { name: "使用的MAPDL内存", value: "", locked: true },
  { name: "MAPDL结果文件大小", value: "", locked: true },
  { head: "后处理" },
  { name: "梁截面结果", value: "否" },
  { name: "", value: "" },
];

function DetailsPanel() {
  return (
    <section className="flex h-[234px] shrink-0 flex-col bg-white">
      <PanelHeader title={'"求解 (A6)"的详细信息'} />
      <div className="flex min-h-0 flex-1 overflow-hidden">
        <table className="w-[198px] shrink-0 table-fixed border-collapse self-start text-[11px] leading-4 text-black">
          <colgroup>
            <col className="w-[14px]" />
            <col className="w-[114px]" />
            <col className="w-[70px]" />
          </colgroup>
          <tbody>
            {details.map((d, i) =>
              d.head ? (
                <tr key={i} className="h-[21px]">
                  <td className="p-0">
                    <button aria-label="折叠" className="ml-[2px] block">
                      <Svg w={10} h={10}>
                        <path d="M.5 .5h9v9h-9z" stroke="#888" />
                        <path d="M2.500 5h5" stroke="#000" />
                      </Svg>
                    </button>
                  </td>
                  <td colSpan={2} className="border border-[#a0a0a0] p-0 pb-[2px] pl-[3px] font-bold">{d.head}</td>
                </tr>
              ) : (
                <tr key={i} className="h-[21px]">
                  <td className="p-0" />
                  <td className="border border-[#a0a0a0] p-0 pb-[2px] pl-[3px] whitespace-nowrap">
                    {d.tick ? (
                      <label className="flex items-center gap-2">
                        <input type="checkbox" className="size-3 appearance-none border border-[#c0c0c0] bg-white" />
                        {d.name}
                      </label>
                    ) : (
                      d.name
                    )}
                  </td>
                  <td className={`border border-[#a0a0a0] p-0 pb-[2px] pl-[3px] ${d.locked ? "bg-[#e8e6e1]" : ""}`}>{d.value}</td>
                </tr>
              ),
            )}
          </tbody>
        </table>
        <div className="flex flex-1 justify-center bg-[#f8f8fa] pt-[17px]">
          <span className="h-[162px] w-[2px] bg-[#848484]" />
        </div>
      </div>
    </section>
  );
}

/* ---------- graphics area ---------- */

function Tool({ name, label, active }: { name: string; label: string; active?: boolean }) {
  return (
    <button
      aria-label={label}
      className={`flex size-[22px] shrink-0 items-center justify-center ${active ? "border border-[#3399ff] bg-[#e8eef8]" : ""}`}
    >
      <Icon name={name} />
    </button>
  );
}

function TextTool({ icon, label, caret }: { icon?: string; label: string; caret?: boolean }) {
  return (
    <button className="flex shrink-0 items-center gap-[2px] whitespace-nowrap">
      {icon && <Icon name={icon} />}
      {label}
      {caret && <Caret />}
    </button>
  );
}

function Sep() {
  return <span className="mr-[2px] ml-[3px] h-[21px] w-px shrink-0 bg-[#ccccda]" />;
}

function GraphicsToolbar() {
  return (
    <div className="flex h-[27px] shrink-0 items-center overflow-hidden bg-[#eeeef2] pb-px pl-[9px] text-[12px] text-[#222]">
      <Grip />
      <span className="w-[7px] shrink-0" />
      <Tool name="zoomBack" label="上一视图" />
      <Tool name="zoomFwd" label="下一视图" />
      <Sep />
      <Tool name="shaded" label="着色和边" active />
      <Tool name="solid" label="着色" />
      <Tool name="swapCubes" label="切换" />
      <Sep />
      <Tool name="bodies" label="复制视图" />
      <Sep />
      <Tool name="rotate" label="旋转" />
      <span className="flex w-[10px] shrink-0 justify-center"><Caret /></span>
      <Tool name="pan" label="平移" />
      <Tool name="zoomUD" label="缩放" />
      <Tool name="zoomIn" label="框缩放" />
      <Tool name="zoomFit" label="适合窗口" />
      <Tool name="zoomSel" label="缩放到选择" />
      <Sep />
      <div className="ml-1 flex gap-2">
        <TextTool label="选择" />
        <TextTool icon="pickMode" label="模式" caret />
      </div>
      <span className="w-2.5 shrink-0" />
      <Tool name="smartPick" label="智能选择" active />
      <Tool name="pickVertex" label="顶点" />
      <Tool name="pickEdge" label="边" />
      <Tool name="pickFace" label="面" />
      <Tool name="pickBody" label="体" />
      <Tool name="pickGray" label="节点" />
      <Tool name="pickGray2" label="单元面" />
      <Tool name="pickGray3" label="单元" />
      <Tool name="coordsPick" label="坐标" />
      <Tool name="label" label="标签" />
      <Tool name="abc" label="注释" />
      <Sep />
      <div className="ml-1 flex gap-[12px]">
        <TextTool icon="clipboard" label="剪贴板" caret />
        <TextTool label="[ 空 ]" />
      </div>
      <span className="w-1 shrink-0" />
      <Sep />
      <div className="ml-1 flex gap-[12px]">
        <TextTool icon="extend" label="扩展" caret />
        <TextTool icon="pin" label="选择依据" caret />
        <TextTool icon="transform" label="转换" caret />
      </div>
      <span className="mt-2.5 ml-[9px] shrink-0"><Caret color="#111" /></span>
    </div>
  );
}

function Viewport() {
  return (
    <div className="flex min-h-0 flex-1 justify-center overflow-hidden bg-linear-to-b from-[#6a8adf] to-white pt-[30px]">
      <svg width="441" height="370" viewBox="-20 0 441 370" fill="none" className="shrink-0" aria-label="圆柱体模型">
        <defs>
          <linearGradient id="side">
            <stop offset="0" stopColor="#464646" />
            <stop offset=".32" stopColor="#444" />
            <stop offset=".5" stopColor="#646464" />
            <stop offset=".8" stopColor="#8a8a8a" />
            <stop offset="1" stopColor="#9c9c9c" />
          </linearGradient>
        </defs>
        <path d="M110 63V287C110 306 142 334 200.500 334S291 306 291 287V63" fill="url(#side)" stroke="#d5d5d5" strokeWidth=".8" />
        <ellipse cx="200.500" cy="63" rx="90.500" ry="53" fill="#a9a9a9" stroke="#fff" />
        <path d="M162 147.500h10M167.500 143v10" stroke="#4a5cf0" />
        <path d="M18.500 338.500h363v6h-363z" fill="#fff" stroke="#000" />
        <path d="M18 338h91v7h-91zM199 338h92v7h-92z" fill="#000" />
        <g fill="#000" fontSize="10.500" textAnchor="middle">
          <text x="17.500" y="334">0.000</text>
          <text x="199" y="334">0.030</text>
          <text x="367" y="334" textAnchor="start">0.060 (m)</text>
          <text x="108" y="357">0.015</text>
          <text x="290" y="357">0.045</text>
        </g>
      </svg>
    </div>
  );
}

function GraphPanel() {
  return (
    <section className="flex min-w-0 flex-1 flex-col bg-white">
      <PanelHeader title="图形" />
      <div className="flex-1 pt-6 pr-6 pl-8 text-[9px] leading-3 text-black">
        <div className="relative h-[58px] border border-[#a9a9a9]">
          <span className="absolute -top-1.5 -right-[2px] h-[63px] w-[3px] bg-black" />
          <span className="absolute top-[57px] -right-px h-[7px] w-px bg-[#a9a9a9]" />
          <span className="absolute -top-5 right-0">1.</span>
          <span className="absolute top-[65px] right-0">1.</span>
        </div>
      </div>
    </section>
  );
}

/* ---------- layout drop-down ---------- */

type Entry = { icon: string; label: string; key?: string; on?: boolean; off?: boolean; hot?: boolean } | null;

const entries: Entry[] = [
  { icon: "check", label: "图形工具栏", on: true },
  { icon: "check", label: "状态栏", on: true },
  null,
  { icon: "tree", label: "轮廓", key: "Ctrl+O", on: true, hot: true },
  { icon: "worksheet", label: "", on: true },
  { icon: "annot", label: "" },
  { icon: "tag", label: "" },
  { icon: "section", label: "参考资料视图" },
  { icon: "table", label: "表格数据", on: true },
  { icon: "graph", label: "图形", on: true },
  null,
  { icon: "worksheet", label: "工作表", off: true },
  { icon: "print", label: "打印预览" },
  { icon: "report", label: "报告预览" },
  null,
  { icon: "script", label: "脚本" },
  { icon: "annot", label: "注释" },
  { icon: "tag", label: "标签" },
  { icon: "views", label: "管理视图" },
  { icon: "keyframe", label: "关键帧动画" },
  { icon: "keyboard", label: "快捷键" },
  { icon: "metrics", label: "网格度量标准", off: true },
  { icon: "generator", label: "对象生成器" },
  { icon: "section", label: "截面" },
  { icon: "selinfo", label: "选择信息", key: "I" },
];

function LayoutPopup() {
  return (
    <div className="absolute top-[138px] right-0 h-[85px] w-[197px] border border-r-0 border-[#c8c8cc] bg-[#fafafa] text-[11px] text-[#222] shadow-[4px_4px_4px_rgba(0,0,0,0.45)]">
      <div className="flex">
        <button className="flex w-[46px] shrink-0 flex-col items-center pt-1">
          <Svg w={30} h={30}>{bigIcons.fullscreen}</Svg>
          <span className="leading-4 whitespace-nowrap">全屏幕</span>
        </button>
        <div className="mt-px flex h-[21px] flex-1 items-center">
          <button className="flex h-[21px] w-[57px] items-center gap-[2px] bg-[#007acc] pl-[3px] whitespace-nowrap text-white">
            <Icon name="manage" />
            管理
            <Caret color="#cfe3f5" />
          </button>
          <button className="ml-auto flex items-center gap-[2px] pr-[7px] whitespace-nowrap">
            <Icon name="reset" />
            重置布局
          </button>
        </div>
      </div>
      <div role="menu" className="absolute top-[22px] right-[3px] w-[148px] border border-[#ccccda] bg-[#f6f6f6] py-px shadow-[4px_4px_4px_rgba(0,0,0,0.5)]">
        {entries.map((e, i) =>
          e ? (
            <button
              key={i}
              role="menuitem"
              disabled={e.off}
              className={`mx-px flex h-[22px] w-[144px] items-center pl-[3px] text-left ${e.hot ? "bg-[#c9def5]" : ""} ${e.off ? "text-[#a2a2a2]" : ""}`}
            >
              <span className={`flex size-5 items-center justify-center ${e.on ? "border border-[#007acc] bg-[#eeeef2]" : ""}`}>
                <Icon name={e.icon} />
              </span>
              <span className="ml-[11px] flex-1">{e.label}</span>
              <span className="pr-[19px]">{e.key}</span>
            </button>
          ) : (
            <div key={i} className="flex h-[3px] items-center pl-[35px]">
              <span className="h-px flex-1 bg-[#e0e0e4]" />
            </div>
          ),
        )}
      </div>
      <div role="tooltip" className="absolute top-[93px] right-[15px] h-[81px] w-[128px] border border-black bg-[#fafafa] px-1 pt-1 text-[12px] text-black shadow-[4px_4px_3px_rgba(0,0,0,0.45)]">
        <p className="leading-[17px] font-bold">轮廓 (Ctrl+O)</p>
        <div className="flex gap-1 pt-1 pl-1">
          <Svg w={47} h={48}>
            <path d="M6.500 12v8.500H26M16.500 21v17.500H34" stroke={GRAY} strokeWidth="3" />
            <path d="M1 1h11v11H1z" fill="#fff" stroke={GRAY} strokeWidth="2" />
            <path d="M26.500 15h11v11h-11zM34.500 33h11v11h-11z" fill={GOLD} stroke={GRAY} strokeWidth="2" />
          </Svg>
          <p className="pt-[7px] leading-[17px] whitespace-nowrap">
            显示/隐藏
            <br />
            轮廓窗格。
          </p>
        </div>
      </div>
    </div>
  );
}

function StatusBar() {
  return (
    <footer className="flex h-[22px] shrink-0 items-center bg-[#007acc] pl-2 text-[12px] whitespace-nowrap text-white">
      <span>显示/隐藏轮廓窗格。</span>
      <div className="ml-auto flex items-center">
        <button className="flex items-center gap-[3px]">
          <Svg w={16} h={16}>
            <path d="M1 5h14v7H7l-4 4v-4H1z" fill="#ffe08a" stroke="#c79a2a" strokeWidth=".5" />
            <circle cx="9" cy="5.500" r="5.200" fill="#1818d8" stroke="#cfe0ff" strokeWidth=".6" />
            <path d="M9 2v1.600M7.800 5.200H9V8.500M7.500 8.500h3" stroke="#fff" strokeWidth="1.500" />
          </Svg>
          1 消息
        </button>
        <span className="ml-[18px]">无选择</span>
        <button className="ml-[22px] flex items-center gap-[5px]">
          <Svg w={9} h={5}><path d="M0 5h9L4.500 0z" fill="#fff" /></Svg>
          度量标准（m、kg、N、s、V、A）
        </button>
        <span className="ml-[18px]">度</span>
        <span className="ml-4">rad</span>
        <span className="mr-4 ml-4">摄氏度</span>
        <Svg w={12} h={12}>
          <path d="M9 2h1M9 5h1M6 5h1M9 8h1M6 8h1M3 8h1M9 11h1M6 11h1M3 11h1M0 11h1" stroke="#7fbce6" />
        </Svg>
      </div>
    </footer>
  );
}

export default function App() {
  return (
    <div className="relative flex h-screen flex-col overflow-hidden border-x border-t border-[#007acc] bg-[#eeeef2] font-['Open_Sans','Noto_Sans_CJK_SC',sans-serif]">
      <TitleBar />
      <TabBar />
      <Ribbon />
      <div className="flex min-h-0 flex-1 gap-1">
        <aside className="flex w-[215px] shrink-0 flex-col gap-1">
          <OutlinePanel />
          <DetailsPanel />
        </aside>
        <main className="flex min-w-0 flex-1 flex-col">
          <GraphicsToolbar />
          <Viewport />
          <div className="mt-1 flex h-[150px] shrink-0 gap-1">
            <GraphPanel />
            <section className="flex min-w-0 flex-1 flex-col bg-[#a0a0a0]">
              <PanelHeader title="表格数据" />
            </section>
          </div>
        </main>
      </div>
      <StatusBar />
      <LayoutPopup />
    </div>
  );
}
